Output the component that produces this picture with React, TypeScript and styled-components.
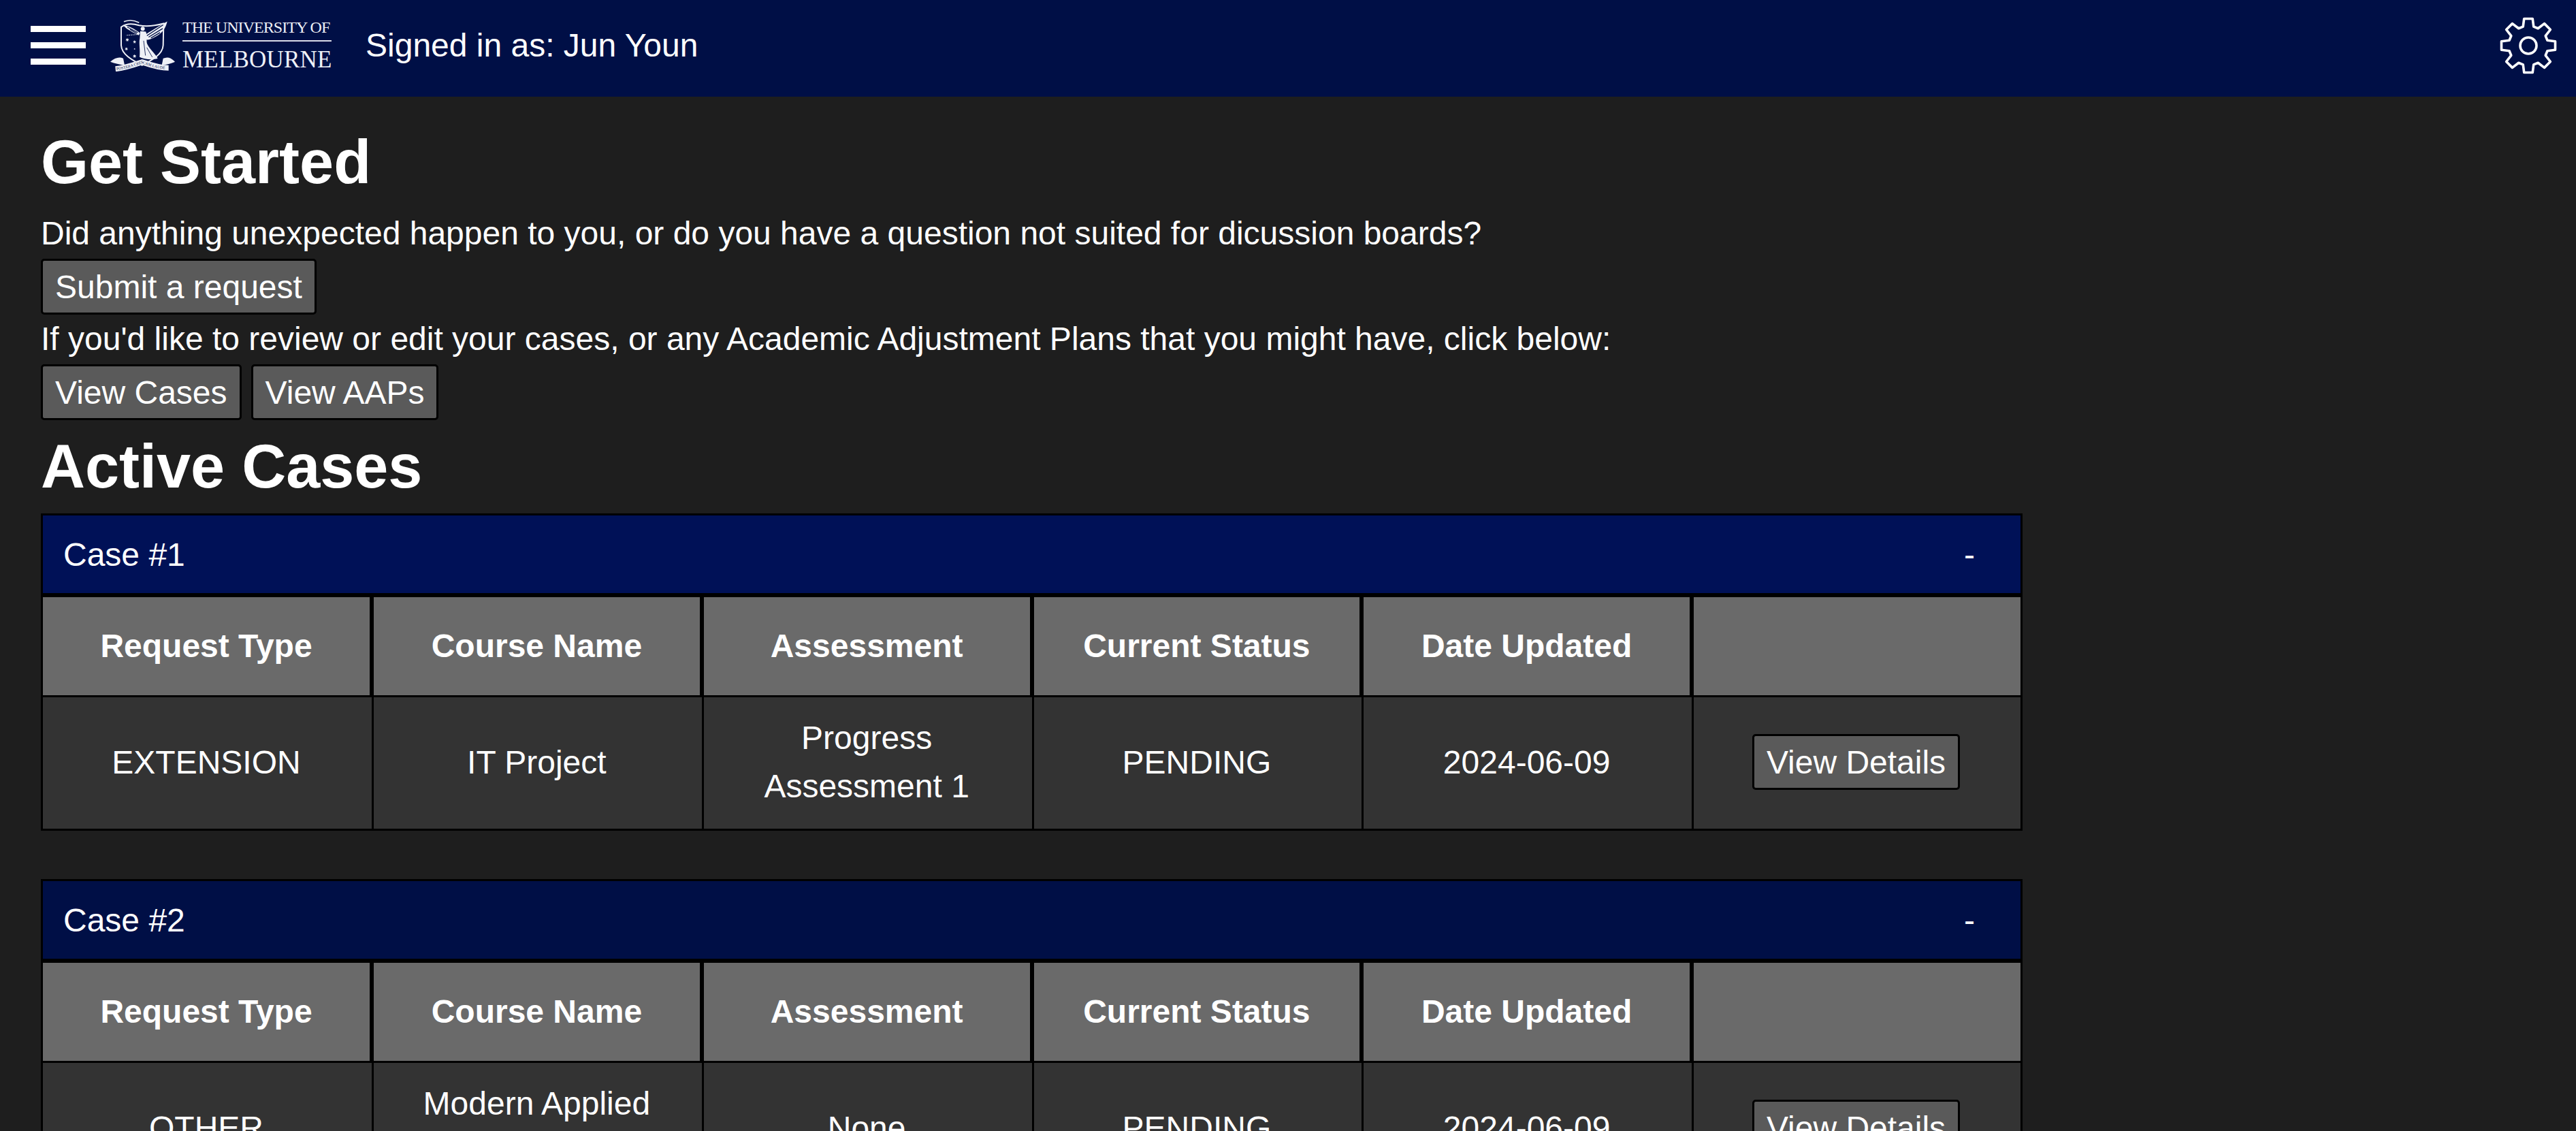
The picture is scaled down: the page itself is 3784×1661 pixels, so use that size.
import React from "react";
import styled, { createGlobalStyle } from "styled-components";

const GlobalStyle = createGlobalStyle`
  html, body {
    margin: 0;
    height: 100%;
    overflow: hidden;
    background: #1e1e1e;
  }

  body {
    color: #fff;
    font-family: "Liberation Sans", Arial, sans-serif;
    font-size: 48px;
  }

  * {
    box-sizing: border-box;
  }
`;

const Navbar = styled.header`
  display: flex;
  align-items: center;
  height: 142px;
  padding: 0 28px 9px 45px;
  background: #000f46;
`;

const MenuButton = styled.div`
  display: flex;
  flex-direction: column;
  gap: 15px;
  width: 81px;
  margin-right: 36px;

  span {
    display: block;
    height: 9px;
    background: #fff;
  }
`;

const Logo = styled.div`
  display: flex;
  align-items: center;
  margin-right: 50px;
`;

const LogoType = styled.div`
  display: flex;
  flex-direction: column;
  width: 219px;
  margin-left: 11px;
  font-family: "Liberation Serif", "Times New Roman", serif;
  color: #eef0f6;
  white-space: nowrap;
`;

const LogoTop = styled.div`
  padding-bottom: 7px;
  border-bottom: 2px solid #d9dce8;
  font-size: 24px;
  line-height: 24px;
  letter-spacing: -0.95px;
`;

const LogoBottom = styled.div`
  padding-top: 9px;
  font-size: 35px;
  line-height: 35px;
  letter-spacing: 0.2px;
`;

const SignedIn = styled.div`
  flex: 1;
  font-size: 48px;
`;

const Main = styled.main`
  padding: 0 60px;
`;

const Title = styled.h1<{ $first?: boolean }>`
  margin: ${(p) => (p.$first ? "45px 0 25px" : "17px 0 17px")};
  font-size: 90px;
  font-weight: 700;
  line-height: 103px;
`;

const Text = styled.p`
  margin: 8px 0 10px;
  font-size: 48px;
  line-height: 55px;
`;

const ButtonRow = styled.div`
  display: flex;
  gap: 14px;
`;

const Button = styled.button`
  height: 82px;
  padding: 0 18px;
  background: #5a5a5a;
  border: 3px solid #000;
  border-radius: 5px;
  color: #fff;
  font-family: inherit;
  font-size: 48px;
`;

const CaseCard = styled.section`
  width: 2911px;
  margin-bottom: 71px;
  border: 3px solid #000;
`;

const CaseHeader = styled.div<{ $active?: boolean }>`
  display: flex;
  align-items: center;
  justify-content: space-between;
  height: 114px;
  padding: 0 67px 0 30px;
  background: ${(p) => (p.$active ? "#001157" : "#000f46")};
  font-size: 48px;
`;

const Grid = styled.div`
  display: grid;
  grid-template-columns: 486px repeat(4, 484.75px) 1fr;
  border-top: 6px solid #000;
`;

const HeadCell = styled.div`
  display: flex;
  align-items: center;
  justify-content: center;
  height: 147px;
  padding-bottom: 2px;
  background: #6a6a6a;
  border-right: 6px solid #000;
  border-bottom: 3px solid #000;
  font-weight: 700;

  &:nth-child(6) {
    border-right: 0;
  }
`;

const BodyCell = styled.div`
  display: flex;
  align-items: center;
  justify-content: center;
  height: 193px;
  padding: 0 31px 3px 28px;
  background: #333;
  border-right: 3px solid #000;
  line-height: 71px;
  text-align: center;

  &:nth-child(12) {
    border-right: 0;
  }
`;

// 8 teeth around the centre of an 84 unit box
const gearPath = () => {
  const at = (deg: number, r: number) => {
    const rad = (deg * Math.PI) / 180;
    return `${(42 + r * Math.sin(rad)).toFixed(2)} ${(42 - r * Math.cos(rad)).toFixed(2)}`;
  };
  const points: string[] = [];
  for (let i = 0; i < 8; i++) {
    const a = i * 45;
    points.push(at(a - 15.5, 29), at(a - 9, 40), at(a + 9, 40), at(a + 15.5, 29));
  }
  return `M${points.join("L")}Z`;
};

const GearIcon = () => (
  <svg width="84" height="84" viewBox="0 0 84 84" fill="none" stroke="#fff" strokeWidth="3.6" strokeLinejoin="round">
    <path d={gearPath()} />
    <circle cx="42" cy="42" r="12" />
  </svg>
);

const NAVY = "#000f46";
const CREST = "#eef0f6";

const star = (cx: number, cy: number, r: number) => {
  const pts: string[] = [];
  for (let i = 0; i < 14; i++) {
    const rad = (i * Math.PI) / 7;
    const len = i % 2 === 0 ? r : r * 0.42;
    pts.push(`${(cx + len * Math.sin(rad)).toFixed(1)},${(cy - len * Math.cos(rad)).toFixed(1)}`);
  }
  return pts.join(" ");
};

const Crest = () => (
  <svg width="95" height="77" viewBox="65 55 285 230" fill="none">
    <path
      d="M113 90C135 72 165 74 192 82C230 90 270 82 300 74L298 170C296 210 250 235 205 258C160 235 115 210 113 170Z"
      stroke={CREST}
      strokeWidth="6"
    />
    <path d="M125 66C150 56 175 62 192 70" stroke={CREST} strokeWidth="5" />
    <path d="M212 128C240 110 280 85 316 65C310 92 296 115 268 130C250 140 236 146 226 146Z" fill={CREST} />
    <path d="M226 128L298 80M234 134L296 96M244 138L284 114" stroke={NAVY} strokeWidth="4" />
    <path d="M196 116C172 98 150 86 122 80C128 92 146 104 190 126Z" fill={CREST} />
    <path d="M140 90L186 114M152 100L182 118" stroke={NAVY} strokeWidth="3.500" />
    <circle cx="208" cy="97" r="9" fill={CREST} />
    <path d="M197 108L222 110C230 135 222 150 228 165C240 190 262 205 274 228C250 236 215 232 194 222C198 190 190 160 195 140Z" fill={CREST} />
    <path d="M212 150L220 215M226 180L250 222" stroke={NAVY} strokeWidth="2.500" />
    <path d="M192 122L135 126" stroke={CREST} strokeWidth="3" strokeDasharray="5 3" />
    <polygon points={star(140, 146, 9)} fill={CREST} />
    <polygon points={star(172, 155, 8)} fill={CREST} />
    <polygon points={star(136, 186, 8)} fill={CREST} />
    <polygon points={star(172, 186, 4)} fill={CREST} />
    <polygon points={star(172, 218, 9)} fill={CREST} />
    <path d="M65 243C85 225 105 220 122 228L128 258C105 256 85 250 65 243Z" fill={CREST} />
    <path d="M350 243C332 222 315 220 298 228L292 258C315 256 335 250 350 243Z" fill={CREST} />
    <path id="crest-banner" d="M88 274C130 270 170 256 205 244C240 256 280 270 322 270" stroke={CREST} strokeWidth="24" />
    <text fill={NAVY} fontFamily="'Liberation Serif', serif" fontSize="17" dy="6">
      <textPath href="#crest-banner" startOffset="4">POSTERA CRESCAM LAUDE</textPath>
    </text>
  </svg>
);

const columns = ["Request Type", "Course Name", "Assessment", "Current Status", "Date Updated", ""];

const cases = [
  { id: 1, type: "EXTENSION", course: "IT Project", assessment: "Progress Assessment 1", status: "PENDING", date: "2024-06-09" },
  { id: 2, type: "OTHER", course: "Modern Applied Statistics", assessment: "None", status: "PENDING", date: "2024-06-09" },
];

const App = () => {
  return (
    <>
      <GlobalStyle />
      <Navbar>
        <MenuButton>
          <span />
          <span />
          <span />
        </MenuButton>
        <Logo>
          <Crest />
          <LogoType>
            <LogoTop>THE UNIVERSITY OF</LogoTop>
            <LogoBottom>MELBOURNE</LogoBottom>
          </LogoType>
        </Logo>
        <SignedIn>Signed in as: Jun Youn</SignedIn>
        <GearIcon />
      </Navbar>
      <Main>
        <Title $first>Get Started</Title>
        <Text>Did anything unexpected happen to you, or do you have a question not suited for dicussion boards?</Text>
        <ButtonRow>
          <Button>Submit a request</Button>
        </ButtonRow>
        <Text>If you'd like to review or edit your cases, or any Academic Adjustment Plans that you might have, click below:</Text>
        <ButtonRow>
          <Button>View Cases</Button>
          <Button>View AAPs</Button>
        </ButtonRow>
        <Title>Active Cases</Title>
        {cases.map((c) => (
          <CaseCard key={c.id}>
            <CaseHeader $active={c.id === 1}>
              <span>Case #{c.id}</span>
              <span>-</span>
            </CaseHeader>
            <Grid>
              {columns.map((name) => (
                <HeadCell key={name || "actions"}>{name}</HeadCell>
              ))}
              <BodyCell>{c.type}</BodyCell>
              <BodyCell>{c.course}</BodyCell>
              <BodyCell>{c.assessment}</BodyCell>
              <BodyCell>{c.status}</BodyCell>
              <BodyCell>{c.date}</BodyCell>
              <BodyCell>
                <Button>View Details</Button>
              </BodyCell>
            </Grid>
          </CaseCard>
        ))}
      </Main>
    </>
  );
};

export default App;
